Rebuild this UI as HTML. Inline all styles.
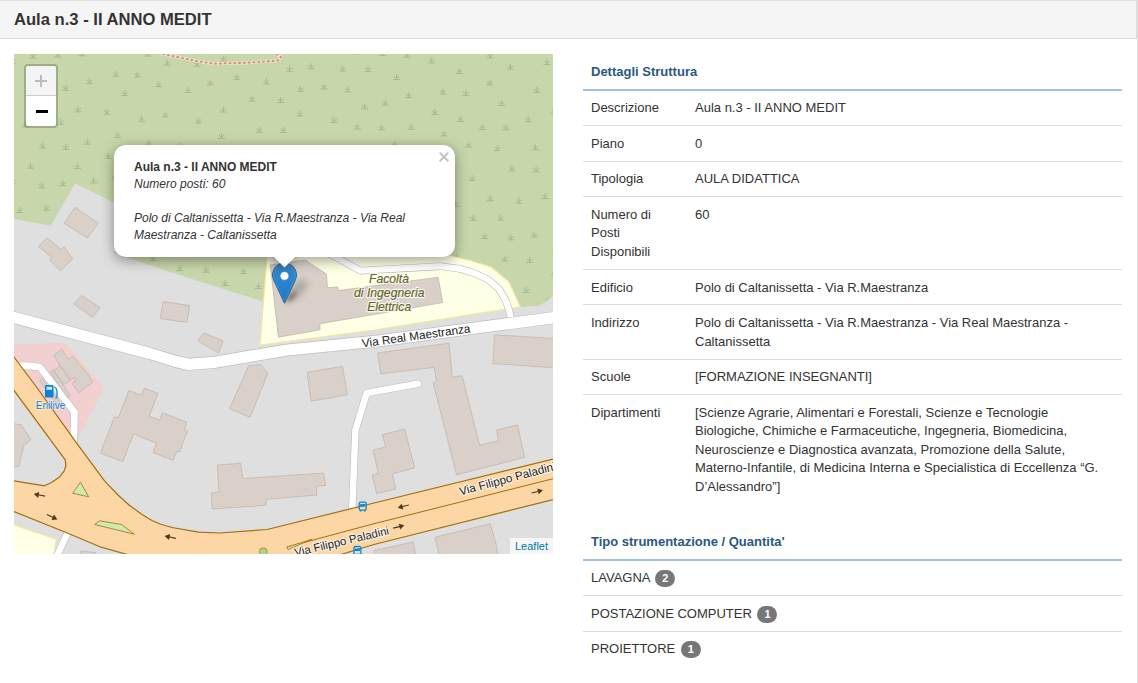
<!DOCTYPE html>
<html><head><meta charset="utf-8">
<style>
html,body{margin:0;padding:0;background:#fff;width:1138px;height:683px;overflow:hidden;position:relative;font-family:"Liberation Sans",sans-serif;color:#333;}
.hdr{position:absolute;left:-1px;top:0;width:1137px;height:37px;background:#f5f5f5;border-top:1px solid #ddd;border-bottom:1px solid #ddd;border-right:1px solid #ddd;}
.vline{position:absolute;left:1137px;top:0;width:1px;height:683px;background:#ddd;}
.title{position:absolute;left:14px;top:10px;font-size:16.6px;font-weight:bold;color:#333;line-height:20px;white-space:nowrap;}
#map{position:absolute;left:14px;top:54px;width:539px;height:500px;overflow:hidden;background:#e0dfdf;}
#map svg{position:absolute;left:0;top:0;}
.zoom{position:absolute;left:10px;top:10px;width:30px;border:2px solid rgba(0,0,0,0.2);border-radius:4px;background-clip:padding-box;}
.zoom div{width:30px;height:30px;}
.zin{background:#f4f4f4;color:#bbb;border-bottom:1px solid #ccc;border-radius:2px 2px 0 0;height:29px!important;}
.zout{background:#fff;color:#000;border-radius:0 0 2px 2px;}
.popup{position:absolute;left:100px;top:91px;width:341px;height:112px;background:#fff;border-radius:12px;box-shadow:0 3px 14px rgba(0,0,0,0.4);}
.pc{position:absolute;left:20px;top:14px;width:300px;font-size:12px;line-height:16.8px;color:#333;}
.close{position:absolute;left:330.1px;top:12.4px;width:0;height:0;}.close:before,.close:after{content:"";position:absolute;left:-6px;top:-1.1px;width:12px;height:2.2px;background:#c3c3c3;transform:rotate(45deg);}.close:after{transform:rotate(-45deg);}
.tipc{position:absolute;left:251px;top:203px;width:40px;height:20px;overflow:hidden;}
.tip{position:absolute;left:11px;top:-10px;width:17px;height:17px;background:#fff;transform:rotate(45deg);box-shadow:0 3px 14px rgba(0,0,0,0.4);}
.attr{position:absolute;right:0;bottom:0;background:rgba(255,255,255,0.7);font-size:11px;line-height:16px;padding:0 5px;color:#0078a8;}
.tbl{position:absolute;left:583px;width:539px;border-collapse:collapse;font-size:13px;line-height:18.57px;color:#333;}
.tbl th{font-weight:bold;color:#2b5781;text-align:left;padding:8.7px 8px 7.3px;border-bottom:2px solid #a4c0da;}
.tbl td{padding:8.7px 8px 7.3px;border-top:1px solid #ddd;vertical-align:top;}
.badge{display:inline-block;width:20px;margin-left:2px;padding:3px 0;font-size:11px;font-weight:bold;line-height:1;color:#fff;text-align:center;white-space:nowrap;vertical-align:middle;background:#777;border-radius:10px;}
</style></head>
<body>
<div class="hdr"></div>
<div class="vline"></div>
<div class="title">Aula n.3 - II ANNO MEDIT</div>

<div id="map">
<svg id="msvg" width="539" height="500" viewBox="14 54 539 500">
<rect x="0" y="0" width="600" height="600" fill="#e0dfdf"/>
<polygon points="14,54 554,54 554,295.6 540,305.4 520,307 265,302 194,279.7 113,253 130,230 114,202.5 75,183.6 50.7,225.7 14,219" fill="#c8d7ab" />
<clipPath id="scrubclip"><polygon points="14,54 554,54 554,295.6 540,305.4 520,307 265,302 194,279.7 113,253 130,230 114,202.5 75,183.6 50.7,225.7 14,219" fill="#000" /></clipPath>
<g clip-path="url(#scrubclip)" stroke="#a8b98c" stroke-width="1" fill="none"><path d="M184.6,92.4 h7 M188.1,92.4 v-5.5 M188.1,91.4 l-2.8,-2.5 M188.1,91.4 l2.8,-2.5" /><path d="M364.5,71.4 h7 M368.0,71.4 v-5.5 M368.0,70.4 l-2.8,-2.5 M368.0,70.4 l2.8,-2.5" /><path d="M301.2,150.0 h7 M304.7,150.0 v-5.5 M304.7,149.0 l-2.8,-2.5 M304.7,149.0 l2.8,-2.5" /><path d="M38.4,188.0 h7 M41.9,188.0 v-5.5 M41.9,187.0 l-2.8,-2.5 M41.9,187.0 l2.8,-2.5" /><path d="M27.1,168.2 h7 M30.6,168.2 v-5.5 M30.6,167.2 l-2.8,-2.5 M30.6,167.2 l2.8,-2.5" /><path d="M44.9,76.3 h7 M48.4,76.3 v-5.5 M48.4,75.3 l-2.8,-2.5 M48.4,75.3 l2.8,-2.5" /><path d="M240.0,273.6 h7 M243.5,273.6 v-5.5 M243.5,272.6 l-2.8,-2.5 M243.5,272.6 l2.8,-2.5" /><path d="M74.6,111.8 h7 M78.1,111.8 v-5.5 M78.1,110.8 l-2.8,-2.5 M78.1,110.8 l2.8,-2.5" /><path d="M351.6,306.0 h7 M355.1,306.0 v-5.5 M355.1,305.0 l-2.8,-2.5 M355.1,305.0 l2.8,-2.5" /><path d="M323.9,158.3 h7 M327.4,158.3 v-5.5 M327.4,157.3 l-2.8,-2.5 M327.4,157.3 l2.8,-2.5" /><path d="M543.4,64.5 h7 M546.9,64.5 v-5.5 M546.9,63.5 l-2.8,-2.5 M546.9,63.5 l2.8,-2.5" /><path d="M478.7,129.6 h7 M482.2,129.6 v-5.5 M482.2,128.6 l-2.8,-2.5 M482.2,128.6 l2.8,-2.5" /><path d="M85.8,83.6 h7 M89.3,83.6 v-5.5 M89.3,82.6 l-2.8,-2.5 M89.3,82.6 l2.8,-2.5" /><path d="M176.2,270.7 h7 M179.7,270.7 v-5.5 M179.7,269.7 l-2.8,-2.5 M179.7,269.7 l2.8,-2.5" /><path d="M105.9,207.9 h7 M109.4,207.9 v-5.5 M109.4,206.9 l-2.8,-2.5 M109.4,206.9 l2.8,-2.5" /><path d="M357.9,151.8 h7 M361.4,151.8 v-5.5 M361.4,150.8 l-2.8,-2.5 M361.4,150.8 l2.8,-2.5" /><path d="M307.8,68.8 h7 M311.3,68.8 v-5.5 M311.3,67.8 l-2.8,-2.5 M311.3,67.8 l2.8,-2.5" /><path d="M39.3,107.2 h7 M42.8,107.2 v-5.5 M42.8,106.2 l-2.8,-2.5 M42.8,106.2 l2.8,-2.5" /><path d="M380.7,166.6 h7 M384.2,166.6 v-5.5 M384.2,165.6 l-2.8,-2.5 M384.2,165.6 l2.8,-2.5" /><path d="M179.3,208.9 h7 M182.8,208.9 v-5.5 M182.8,207.9 l-2.8,-2.5 M182.8,207.9 l2.8,-2.5" /><path d="M255.8,132.3 h7 M259.3,132.3 v-5.5 M259.3,131.3 l-2.8,-2.5 M259.3,131.3 l2.8,-2.5" /><path d="M443.4,239.3 h7 M446.9,239.3 v-5.5 M446.9,238.3 l-2.8,-2.5 M446.9,238.3 l2.8,-2.5" /><path d="M140.8,205.9 h7 M144.3,205.9 v-5.5 M144.3,204.9 l-2.8,-2.5 M144.3,204.9 l2.8,-2.5" /><path d="M295.4,286.5 h7 M298.9,286.5 v-5.5 M298.9,285.5 l-2.8,-2.5 M298.9,285.5 l2.8,-2.5" /><path d="M407.7,129.2 h7 M411.2,129.2 v-5.5 M411.2,128.2 l-2.8,-2.5 M411.2,128.2 l2.8,-2.5" /><path d="M90.1,183.0 h7 M93.6,183.0 v-5.5 M93.6,182.0 l-2.8,-2.5 M93.6,182.0 l2.8,-2.5" /><path d="M28.1,231.1 h7 M31.6,231.1 v-5.5 M31.6,230.1 l-2.8,-2.5 M31.6,230.1 l2.8,-2.5" /><path d="M427.0,205.6 h7 M430.5,205.6 v-5.5 M430.5,204.6 l-2.8,-2.5 M430.5,204.6 l2.8,-2.5" /><path d="M388.9,211.3 h7 M392.4,211.3 v-5.5 M392.4,210.3 l-2.8,-2.5 M392.4,210.3 l2.8,-2.5" /><path d="M468.5,305.2 h7 M472.0,305.2 v-5.5 M472.0,304.2 l-2.8,-2.5 M472.0,304.2 l2.8,-2.5" /><path d="M267.3,230.0 h7 M270.8,230.0 v-5.5 M270.8,229.0 l-2.8,-2.5 M270.8,229.0 l2.8,-2.5" /><path d="M218.7,231.2 h7 M222.2,231.2 v-5.5 M222.2,230.2 l-2.8,-2.5 M222.2,230.2 l2.8,-2.5" /><path d="M38.9,257.9 h7 M42.4,257.9 v-5.5 M42.4,256.9 l-2.8,-2.5 M42.4,256.9 l2.8,-2.5" /><path d="M221.5,285.5 h7 M225.0,285.5 v-5.5 M225.0,284.5 l-2.8,-2.5 M225.0,284.5 l2.8,-2.5" /><path d="M457.1,283.5 h7 M460.6,283.5 v-5.5 M460.6,282.5 l-2.8,-2.5 M460.6,282.5 l2.8,-2.5" /><path d="M159.6,163.3 h7 M163.1,163.3 v-5.5 M163.1,162.3 l-2.8,-2.5 M163.1,162.3 l2.8,-2.5" /><path d="M533.3,92.4 h7 M536.8,92.4 v-5.5 M536.8,91.4 l-2.8,-2.5 M536.8,91.4 l2.8,-2.5" /><path d="M103.4,114.2 h7 M106.9,114.2 v-5.5 M106.9,113.2 l-2.8,-2.5 M106.9,113.2 l2.8,-2.5" /><path d="M134.8,182.0 h7 M138.3,182.0 v-5.5 M138.3,181.0 l-2.8,-2.5 M138.3,181.0 l2.8,-2.5" /><path d="M330.5,122.4 h7 M334.0,122.4 v-5.5 M334.0,121.4 l-2.8,-2.5 M334.0,121.4 l2.8,-2.5" /><path d="M209.6,203.8 h7 M213.1,203.8 v-5.5 M213.1,202.8 l-2.8,-2.5 M213.1,202.8 l2.8,-2.5" /><path d="M530.7,237.1 h7 M534.2,237.1 v-5.5 M534.2,236.1 l-2.8,-2.5 M534.2,236.1 l2.8,-2.5" /><path d="M290.0,217.5 h7 M293.5,217.5 v-5.5 M293.5,216.5 l-2.8,-2.5 M293.5,216.5 l2.8,-2.5" /><path d="M501.2,261.0 h7 M504.7,261.0 v-5.5 M504.7,260.0 l-2.8,-2.5 M504.7,260.0 l2.8,-2.5" /><path d="M222.3,158.9 h7 M225.8,158.9 v-5.5 M225.8,157.9 l-2.8,-2.5 M225.8,157.9 l2.8,-2.5" /><path d="M63.400000000000006,222.0 h7 M66.9,222.0 v-5.5 M66.9,221.0 l-2.8,-2.5 M66.9,221.0 l2.8,-2.5" /><path d="M121.3,95.5 h7 M124.8,95.5 v-5.5 M124.8,94.5 l-2.8,-2.5 M124.8,94.5 l2.8,-2.5" /><path d="M193.5,66.1 h7 M197.0,66.1 v-5.5 M197.0,65.1 l-2.8,-2.5 M197.0,65.1 l2.8,-2.5" /><path d="M6.6,92.5 h7 M10.1,92.5 v-5.5 M10.1,91.5 l-2.8,-2.5 M10.1,91.5 l2.8,-2.5" /><path d="M62.3,149.4 h7 M65.8,149.4 v-5.5 M65.8,148.4 l-2.8,-2.5 M65.8,148.4 l2.8,-2.5" /><path d="M20.5,286.3 h7 M24.0,286.3 v-5.5 M24.0,285.3 l-2.8,-2.5 M24.0,285.3 l2.8,-2.5" /><path d="M344.2,91.8 h7 M347.7,91.8 v-5.5 M347.7,90.8 l-2.8,-2.5 M347.7,90.8 l2.8,-2.5" /><path d="M145.2,145.1 h7 M148.7,145.1 v-5.5 M148.7,144.1 l-2.8,-2.5 M148.7,144.1 l2.8,-2.5" /><path d="M206.8,84.9 h7 M210.3,84.9 v-5.5 M210.3,83.9 l-2.8,-2.5 M210.3,83.9 l2.8,-2.5" /><path d="M262.8,181.7 h7 M266.3,181.7 v-5.5 M266.3,180.7 l-2.8,-2.5 M266.3,180.7 l2.8,-2.5" /><path d="M194.9,123.0 h7 M198.4,123.0 v-5.5 M198.4,122.0 l-2.8,-2.5 M198.4,122.0 l2.8,-2.5" /><path d="M462.4,95.3 h7 M465.9,95.3 v-5.5 M465.9,94.3 l-2.8,-2.5 M465.9,94.3 l2.8,-2.5" /><path d="M297.0,91.3 h7 M300.5,91.3 v-5.5 M300.5,90.3 l-2.8,-2.5 M300.5,90.3 l2.8,-2.5" /><path d="M297.0,314.2 h7 M300.5,314.2 v-5.5 M300.5,313.2 l-2.8,-2.5 M300.5,313.2 l2.8,-2.5" /><path d="M481.3,238.6 h7 M484.8,238.6 v-5.5 M484.8,237.6 l-2.8,-2.5 M484.8,237.6 l2.8,-2.5" /><path d="M98.4,258.9 h7 M101.9,258.9 v-5.5 M101.9,257.9 l-2.8,-2.5 M101.9,257.9 l2.8,-2.5" /><path d="M299.4,260.8 h7 M302.9,260.8 v-5.5 M302.9,259.8 l-2.8,-2.5 M302.9,259.8 l2.8,-2.5" /><path d="M475.4,268.0 h7 M478.9,268.0 v-5.5 M478.9,267.0 l-2.8,-2.5 M478.9,267.0 l2.8,-2.5" /><path d="M21.9,126.9 h7 M25.4,126.9 v-5.5 M25.4,125.9 l-2.8,-2.5 M25.4,125.9 l2.8,-2.5" /><path d="M149.0,237.6 h7 M152.5,237.6 v-5.5 M152.5,236.6 l-2.8,-2.5 M152.5,236.6 l2.8,-2.5" /><path d="M532.6,171.9 h7 M536.1,171.9 v-5.5 M536.1,170.9 l-2.8,-2.5 M536.1,170.9 l2.8,-2.5" /><path d="M521.9,316.8 h7 M525.4,316.8 v-5.5 M525.4,315.8 l-2.8,-2.5 M525.4,315.8 l2.8,-2.5" /><path d="M531.8,149.7 h7 M535.3,149.7 v-5.5 M535.3,148.7 l-2.8,-2.5 M535.3,148.7 l2.8,-2.5" /><path d="M468.7,180.5 h7 M472.2,180.5 v-5.5 M472.2,179.5 l-2.8,-2.5 M472.2,179.5 l2.8,-2.5" /><path d="M365.6,266.3 h7 M369.1,266.3 v-5.5 M369.1,265.3 l-2.8,-2.5 M369.1,265.3 l2.8,-2.5" /><path d="M419.1,180.1 h7 M422.6,180.1 v-5.5 M422.6,179.1 l-2.8,-2.5 M422.6,179.1 l2.8,-2.5" /><path d="M227.3,305.7 h7 M230.8,305.7 v-5.5 M230.8,304.7 l-2.8,-2.5 M230.8,304.7 l2.8,-2.5" /><path d="M405.1,97.6 h7 M408.6,97.6 v-5.5 M408.6,96.6 l-2.8,-2.5 M408.6,96.6 l2.8,-2.5" /><path d="M78.5,55.8 h7 M82.0,55.8 v-5.5 M82.0,54.8 l-2.8,-2.5 M82.0,54.8 l2.8,-2.5" /><path d="M78.6,295.9 h7 M82.1,295.9 v-5.5 M82.1,294.9 l-2.8,-2.5 M82.1,294.9 l2.8,-2.5" /><path d="M201.1,174.8 h7 M204.6,174.8 v-5.5 M204.6,173.8 l-2.8,-2.5 M204.6,173.8 l2.8,-2.5" /><path d="M327.3,294.4 h7 M330.8,294.4 v-5.5 M330.8,293.4 l-2.8,-2.5 M330.8,293.4 l2.8,-2.5" /><path d="M282.4,194.5 h7 M285.9,194.5 v-5.5 M285.9,193.5 l-2.8,-2.5 M285.9,193.5 l2.8,-2.5" /><path d="M248.6,101.1 h7 M252.1,101.1 v-5.5 M252.1,100.1 l-2.8,-2.5 M252.1,100.1 l2.8,-2.5" /><path d="M8.7,266.2 h7 M12.2,266.2 v-5.5 M12.2,265.2 l-2.8,-2.5 M12.2,265.2 l2.8,-2.5" /><path d="M508.4,170.8 h7 M511.9,170.8 v-5.5 M511.9,169.8 l-2.8,-2.5 M511.9,169.8 l2.8,-2.5" /><path d="M343.4,187.5 h7 M346.9,187.5 v-5.5 M346.9,186.5 l-2.8,-2.5 M346.9,186.5 l2.8,-2.5" /><path d="M269.4,304.3 h7 M272.9,304.3 v-5.5 M272.9,303.3 l-2.8,-2.5 M272.9,303.3 l2.8,-2.5" /><path d="M391.1,286.9 h7 M394.6,286.9 v-5.5 M394.6,285.9 l-2.8,-2.5 M394.6,285.9 l2.8,-2.5" /><path d="M524.7,121.6 h7 M528.2,121.6 v-5.5 M528.2,120.6 l-2.8,-2.5 M528.2,120.6 l2.8,-2.5" /><path d="M437.7,292.4 h7 M441.2,292.4 v-5.5 M441.2,291.4 l-2.8,-2.5 M441.2,291.4 l2.8,-2.5" /><path d="M492.1,311.3 h7 M495.6,311.3 v-5.5 M495.6,310.3 l-2.8,-2.5 M495.6,310.3 l2.8,-2.5" /><path d="M127.30000000000001,307.3 h7 M130.8,307.3 v-5.5 M130.8,306.3 l-2.8,-2.5 M130.8,306.3 l2.8,-2.5" /><path d="M225.5,182.6 h7 M229.0,182.6 v-5.5 M229.0,181.6 l-2.8,-2.5 M229.0,181.6 l2.8,-2.5" /><path d="M550.9,275.1 h7 M554.4,275.1 v-5.5 M554.4,274.1 l-2.8,-2.5 M554.4,274.1 l2.8,-2.5" /><path d="M114.2,137.4 h7 M117.7,137.4 v-5.5 M117.7,136.4 l-2.8,-2.5 M117.7,136.4 l2.8,-2.5" /><path d="M403.7,57.2 h7 M407.2,57.2 v-5.5 M407.2,56.2 l-2.8,-2.5 M407.2,56.2 l2.8,-2.5" /><path d="M41.9,316.0 h7 M45.4,316.0 v-5.5 M45.4,315.0 l-2.8,-2.5 M45.4,315.0 l2.8,-2.5" /><path d="M155.2,86.7 h7 M158.7,86.7 v-5.5 M158.7,85.7 l-2.8,-2.5 M158.7,85.7 l2.8,-2.5" /><path d="M456.9,121.3 h7 M460.4,121.3 v-5.5 M460.4,120.3 l-2.8,-2.5 M460.4,120.3 l2.8,-2.5" /><path d="M320.3,239.7 h7 M323.8,239.7 v-5.5 M323.8,238.7 l-2.8,-2.5 M323.8,238.7 l2.8,-2.5" /><path d="M52.6,281.5 h7 M56.1,281.5 v-5.5 M56.1,280.5 l-2.8,-2.5 M56.1,280.5 l2.8,-2.5" /><path d="M296.3,115.9 h7 M299.8,115.9 v-5.5 M299.8,114.9 l-2.8,-2.5 M299.8,114.9 l2.8,-2.5" /><path d="M144.2,56.1 h7 M147.7,56.1 v-5.5 M147.7,55.1 l-2.8,-2.5 M147.7,55.1 l2.8,-2.5" /><path d="M384.8,315.3 h7 M388.3,315.3 v-5.5 M388.3,314.3 l-2.8,-2.5 M388.3,314.3 l2.8,-2.5" /><path d="M161.6,116.9 h7 M165.1,116.9 v-5.5 M165.1,115.9 l-2.8,-2.5 M165.1,115.9 l2.8,-2.5" /><path d="M151.3,309.8 h7 M154.8,309.8 v-5.5 M154.8,308.8 l-2.8,-2.5 M154.8,308.8 l2.8,-2.5" /><path d="M541.4,198.6 h7 M544.9,198.6 v-5.5 M544.9,197.6 l-2.8,-2.5 M544.9,197.6 l2.8,-2.5" /><path d="M176.8,147.6 h7 M180.3,147.6 v-5.5 M180.3,146.6 l-2.8,-2.5 M180.3,146.6 l2.8,-2.5" /><path d="M7.1,154.3 h7 M10.6,154.3 v-5.5 M10.6,153.3 l-2.8,-2.5 M10.6,153.3 l2.8,-2.5" /><path d="M29.4,58.0 h7 M32.9,58.0 v-5.5 M32.9,57.0 l-2.8,-2.5 M32.9,57.0 l2.8,-2.5" /><path d="M419.3,228.2 h7 M422.8,228.2 v-5.5 M422.8,227.2 l-2.8,-2.5 M422.8,227.2 l2.8,-2.5" /><path d="M497.1,220.1 h7 M500.6,220.1 v-5.5 M500.6,219.1 l-2.8,-2.5 M500.6,219.1 l2.8,-2.5" /><path d="M410.1,269.7 h7 M413.6,269.7 v-5.5 M413.6,268.7 l-2.8,-2.5 M413.6,268.7 l2.8,-2.5" /><path d="M382.1,237.8 h7 M385.6,237.8 v-5.5 M385.6,236.8 l-2.8,-2.5 M385.6,236.8 l2.8,-2.5" /><path d="M350.9,234.4 h7 M354.4,234.4 v-5.5 M354.4,233.4 l-2.8,-2.5 M354.4,233.4 l2.8,-2.5" /><path d="M275.6,52.9 h7 M279.1,52.9 v-5.5 M279.1,51.9 l-2.8,-2.5 M279.1,51.9 l2.8,-2.5" /><path d="M413.4,313.5 h7 M416.9,313.5 v-5.5 M416.9,312.5 l-2.8,-2.5 M416.9,312.5 l2.8,-2.5" /><path d="M278.2,154.5 h7 M281.7,154.5 v-5.5 M281.7,153.5 l-2.8,-2.5 M281.7,153.5 l2.8,-2.5" /><path d="M378.1,129.9 h7 M381.6,129.9 v-5.5 M381.6,128.9 l-2.8,-2.5 M381.6,128.9 l2.8,-2.5" /><path d="M263.0,83.8 h7 M266.5,83.8 v-5.5 M266.5,82.8 l-2.8,-2.5 M266.5,82.8 l2.8,-2.5" /><path d="M498.0,105.4 h7 M501.5,105.4 v-5.5 M501.5,104.4 l-2.8,-2.5 M501.5,104.4 l2.8,-2.5" /><path d="M544.5,302.9 h7 M548.0,302.9 v-5.5 M548.0,301.9 l-2.8,-2.5 M548.0,301.9 l2.8,-2.5" /><path d="M8.5,183.8 h7 M12.0,183.8 v-5.5 M12.0,182.8 l-2.8,-2.5 M12.0,182.8 l2.8,-2.5" /><path d="M83.9,144.2 h7 M87.4,144.2 v-5.5 M87.4,143.2 l-2.8,-2.5 M87.4,143.2 l2.8,-2.5" /><path d="M502.4,129.7 h7 M505.9,129.7 v-5.5 M505.9,128.7 l-2.8,-2.5 M505.9,128.7 l2.8,-2.5" /><path d="M163.9,65.1 h7 M167.4,65.1 v-5.5 M167.4,64.1 l-2.8,-2.5 M167.4,64.1 l2.8,-2.5" /><path d="M170.3,250.1 h7 M173.8,250.1 v-5.5 M173.8,249.1 l-2.8,-2.5 M173.8,249.1 l2.8,-2.5" /><path d="M112.3,76.3 h7 M115.8,76.3 v-5.5 M115.8,75.3 l-2.8,-2.5 M115.8,75.3 l2.8,-2.5" /><path d="M138.0,121.2 h7 M141.5,121.2 v-5.5 M141.5,120.2 l-2.8,-2.5 M141.5,120.2 l2.8,-2.5" /><path d="M486.6,57.8 h7 M490.1,57.8 v-5.5 M490.1,56.8 l-2.8,-2.5 M490.1,56.8 l2.8,-2.5" /><path d="M329.4,52.0 h7 M332.9,52.0 v-5.5 M332.9,51.0 l-2.8,-2.5 M332.9,51.0 l2.8,-2.5" /><path d="M219.9,111.9 h7 M223.4,111.9 v-5.5 M223.4,110.9 l-2.8,-2.5 M223.4,110.9 l2.8,-2.5" /><path d="M381.9,105.1 h7 M385.4,105.1 v-5.5 M385.4,104.1 l-2.8,-2.5 M385.4,104.1 l2.8,-2.5" /><path d="M128.3,255.8 h7 M131.8,255.8 v-5.5 M131.8,254.8 l-2.8,-2.5 M131.8,254.8 l2.8,-2.5" /><path d="M500.5,288.8 h7 M504.0,288.8 v-5.5 M504.0,287.8 l-2.8,-2.5 M504.0,287.8 l2.8,-2.5" /><path d="M99.6,52.8 h7 M103.1,52.8 v-5.5 M103.1,51.8 l-2.8,-2.5 M103.1,51.8 l2.8,-2.5" /><path d="M202.6,272.2 h7 M206.1,272.2 v-5.5 M206.1,271.2 l-2.8,-2.5 M206.1,271.2 l2.8,-2.5" /><path d="M428.2,62.9 h7 M431.7,62.9 v-5.5 M431.7,61.9 l-2.8,-2.5 M431.7,61.9 l2.8,-2.5" /><path d="M185.7,314.7 h7 M189.2,314.7 v-5.5 M189.2,313.7 l-2.8,-2.5 M189.2,313.7 l2.8,-2.5" /><path d="M59.5,185.6 h7 M63.0,185.6 v-5.5 M63.0,184.6 l-2.8,-2.5 M63.0,184.6 l2.8,-2.5" /><path d="M267.6,271.5 h7 M271.1,271.5 v-5.5 M271.1,270.5 l-2.8,-2.5 M271.1,270.5 l2.8,-2.5" /><path d="M149.5,260.4 h7 M153.0,260.4 v-5.5 M153.0,259.4 l-2.8,-2.5 M153.0,259.4 l2.8,-2.5" /><path d="M334.4,218.1 h7 M337.9,218.1 v-5.5 M337.9,217.1 l-2.8,-2.5 M337.9,217.1 l2.8,-2.5" /><path d="M126.5,159.1 h7 M130.0,159.1 v-5.5 M130.0,158.1 l-2.8,-2.5 M130.0,158.1 l2.8,-2.5" /><path d="M237.5,208.1 h7 M241.0,208.1 v-5.5 M241.0,207.1 l-2.8,-2.5 M241.0,207.1 l2.8,-2.5" /><path d="M486.6,200.8 h7 M490.1,200.8 v-5.5 M490.1,199.8 l-2.8,-2.5 M490.1,199.8 l2.8,-2.5" /><path d="M64.0,318.1 h7 M67.5,318.1 v-5.5 M67.5,317.1 l-2.8,-2.5 M67.5,317.1 l2.8,-2.5" /><path d="M247.0,246.2 h7 M250.5,246.2 v-5.5 M250.5,245.2 l-2.8,-2.5 M250.5,245.2 l2.8,-2.5" /><path d="M42.7,210.2 h7 M46.2,210.2 v-5.5 M46.2,209.2 l-2.8,-2.5 M46.2,209.2 l2.8,-2.5" /><path d="M353.8,129.0 h7 M357.3,129.0 v-5.5 M357.3,128.0 l-2.8,-2.5 M357.3,128.0 l2.8,-2.5" /><path d="M197.2,240.8 h7 M200.7,240.8 v-5.5 M200.7,239.8 l-2.8,-2.5 M200.7,239.8 l2.8,-2.5" /><path d="M391.2,185.5 h7 M394.7,185.5 v-5.5 M394.7,184.5 l-2.8,-2.5 M394.7,184.5 l2.8,-2.5" /><path d="M389.9,262.9 h7 M393.4,262.9 v-5.5 M393.4,261.9 l-2.8,-2.5 M393.4,261.9 l2.8,-2.5" /><path d="M220.1,61.1 h7 M223.6,61.1 v-5.5 M223.6,60.1 l-2.8,-2.5 M223.6,60.1 l2.8,-2.5" /><path d="M84.5,213.8 h7 M88.0,213.8 v-5.5 M88.0,212.8 l-2.8,-2.5 M88.0,212.8 l2.8,-2.5" /><path d="M359.3,173.6 h7 M362.8,173.6 v-5.5 M362.8,172.6 l-2.8,-2.5 M362.8,172.6 l2.8,-2.5" /><path d="M434.5,156.2 h7 M438.0,156.2 v-5.5 M438.0,155.2 l-2.8,-2.5 M438.0,155.2 l2.8,-2.5" /><path d="M122.0,235.4 h7 M125.5,235.4 v-5.5 M125.5,234.4 l-2.8,-2.5 M125.5,234.4 l2.8,-2.5" /><path d="M222.4,256.4 h7 M225.9,256.4 v-5.5 M225.9,255.39999999999998 l-2.8,-2.5 M225.9,255.39999999999998 l2.8,-2.5" /><path d="M465.1,147.1 h7 M468.6,147.1 v-5.5 M468.6,146.1 l-2.8,-2.5 M468.6,146.1 l2.8,-2.5" /><path d="M172.5,180.5 h7 M176.0,180.5 v-5.5 M176.0,179.5 l-2.8,-2.5 M176.0,179.5 l2.8,-2.5" /><path d="M83.7,274.8 h7 M87.2,274.8 v-5.5 M87.2,273.8 l-2.8,-2.5 M87.2,273.8 l2.8,-2.5" /><path d="M12.8,307.1 h7 M16.3,307.1 v-5.5 M16.3,306.1 l-2.8,-2.5 M16.3,306.1 l2.8,-2.5" /><path d="M62.3,90.3 h7 M65.8,90.3 v-5.5 M65.8,89.3 l-2.8,-2.5 M65.8,89.3 l2.8,-2.5" /><path d="M341.1,261.4 h7 M344.6,261.4 v-5.5 M344.6,260.4 l-2.8,-2.5 M344.6,260.4 l2.8,-2.5" /><path d="M452.2,206.2 h7 M455.7,206.2 v-5.5 M455.7,205.2 l-2.8,-2.5 M455.7,205.2 l2.8,-2.5" /><path d="M233.3,79.3 h7 M236.8,79.3 v-5.5 M236.8,78.3 l-2.8,-2.5 M236.8,78.3 l2.8,-2.5" /><path d="M361.0,108.9 h7 M364.5,108.9 v-5.5 M364.5,107.9 l-2.8,-2.5 M364.5,107.9 l2.8,-2.5" /><path d="M456.0,73.4 h7 M459.5,73.4 v-5.5 M459.5,72.4 l-2.8,-2.5 M459.5,72.4 l2.8,-2.5" /><path d="M526.2,262.3 h7 M529.7,262.3 v-5.5 M529.7,261.3 l-2.8,-2.5 M529.7,261.3 l2.8,-2.5" /><path d="M431.2,114.4 h7 M434.7,114.4 v-5.5 M434.7,113.4 l-2.8,-2.5 M434.7,113.4 l2.8,-2.5" /><path d="M554.9,152.2 h7 M558.4,152.2 v-5.5 M558.4,151.2 l-2.8,-2.5 M558.4,151.2 l2.8,-2.5" /><path d="M439.5,93.8 h7 M443.0,93.8 v-5.5 M443.0,92.8 l-2.8,-2.5 M443.0,92.8 l2.8,-2.5" /><path d="M507.0,69.2 h7 M510.5,69.2 v-5.5 M510.5,68.2 l-2.8,-2.5 M510.5,68.2 l2.8,-2.5" /><path d="M379.2,55.4 h7 M382.7,55.4 v-5.5 M382.7,54.4 l-2.8,-2.5 M382.7,54.4 l2.8,-2.5" /><path d="M469.7,220.4 h7 M473.2,220.4 v-5.5 M473.2,219.4 l-2.8,-2.5 M473.2,219.4 l2.8,-2.5" /><path d="M181.4,294.0 h7 M184.9,294.0 v-5.5 M184.9,293.0 l-2.8,-2.5 M184.9,293.0 l2.8,-2.5" /><path d="M206.9,317.6 h7 M210.4,317.6 v-5.5 M210.4,316.6 l-2.8,-2.5 M210.4,316.6 l2.8,-2.5" /><path d="M320.7,89.0 h7 M324.2,89.0 v-5.5 M324.2,88.0 l-2.8,-2.5 M324.2,88.0 l2.8,-2.5" /><path d="M409.5,161.4 h7 M413.0,161.4 v-5.5 M413.0,160.4 l-2.8,-2.5 M413.0,160.4 l2.8,-2.5" /><path d="M72.9,243.5 h7 M76.4,243.5 v-5.5 M76.4,242.5 l-2.8,-2.5 M76.4,242.5 l2.8,-2.5" /><path d="M16.2,212.6 h7 M19.7,212.6 v-5.5 M19.7,211.6 l-2.8,-2.5 M19.7,211.6 l2.8,-2.5" /><path d="M393.0,79.6 h7 M396.5,79.6 v-5.5 M396.5,78.6 l-2.8,-2.5 M396.5,78.6 l2.8,-2.5" /><path d="M312.7,183.7 h7 M316.2,183.7 v-5.5 M316.2,182.7 l-2.8,-2.5 M316.2,182.7 l2.8,-2.5" /><path d="M218.0,138.3 h7 M221.5,138.3 v-5.5 M221.5,137.3 l-2.8,-2.5 M221.5,137.3 l2.8,-2.5" /><path d="M253.89999999999998,155.4 h7 M257.4,155.4 v-5.5 M257.4,154.4 l-2.8,-2.5 M257.4,154.4 l2.8,-2.5" /><path d="M57.4,124.3 h7 M60.9,124.3 v-5.5 M60.9,123.3 l-2.8,-2.5 M60.9,123.3 l2.8,-2.5" /><path d="M486.3,84.9 h7 M489.8,84.9 v-5.5 M489.8,83.9 l-2.8,-2.5 M489.8,83.9 l2.8,-2.5" /><path d="M39.2,147.9 h7 M42.7,147.9 v-5.5 M42.7,146.9 l-2.8,-2.5 M42.7,146.9 l2.8,-2.5" /><path d="M99.6,230.6 h7 M103.1,230.6 v-5.5 M103.1,229.6 l-2.8,-2.5 M103.1,229.6 l2.8,-2.5" /><path d="M552.2,253.1 h7 M555.7,253.1 v-5.5 M555.7,252.1 l-2.8,-2.5 M555.7,252.1 l2.8,-2.5" /><path d="M263.8,206.6 h7 M267.3,206.6 v-5.5 M267.3,205.6 l-2.8,-2.5 M267.3,205.6 l2.8,-2.5" /><path d="M325.8,316.6 h7 M329.3,316.6 v-5.5 M329.3,315.6 l-2.8,-2.5 M329.3,315.6 l2.8,-2.5" /><path d="M515.4,203.2 h7 M518.9,203.2 v-5.5 M518.9,202.2 l-2.8,-2.5 M518.9,202.2 l2.8,-2.5" /><path d="M550.7,113.1 h7 M554.2,113.1 v-5.5 M554.2,112.1 l-2.8,-2.5 M554.2,112.1 l2.8,-2.5" /><path d="M446.8,175.3 h7 M450.3,175.3 v-5.5 M450.3,174.3 l-2.8,-2.5 M450.3,174.3 l2.8,-2.5" /><path d="M361.9,199.1 h7 M365.4,199.1 v-5.5 M365.4,198.1 l-2.8,-2.5 M365.4,198.1 l2.8,-2.5" /><path d="M429.6,258.3 h7 M433.1,258.3 v-5.5 M433.1,257.3 l-2.8,-2.5 M433.1,257.3 l2.8,-2.5" /><path d="M446.2,314.7 h7 M449.7,314.7 v-5.5 M449.7,313.7 l-2.8,-2.5 M449.7,313.7 l2.8,-2.5" /><path d="M200.6,152.4 h7 M204.1,152.4 v-5.5 M204.1,151.4 l-2.8,-2.5 M204.1,151.4 l2.8,-2.5" /><path d="M99.8,304.3 h7 M103.3,304.3 v-5.5 M103.3,303.3 l-2.8,-2.5 M103.3,303.3 l2.8,-2.5" /><path d="M138.4,285.6 h7 M141.9,285.6 v-5.5 M141.9,284.6 l-2.8,-2.5 M141.9,284.6 l2.8,-2.5" /><path d="M322.8,273.3 h7 M326.3,273.3 v-5.5 M326.3,272.3 l-2.8,-2.5 M326.3,272.3 l2.8,-2.5" /><path d="M363.4,287.5 h7 M366.9,287.5 v-5.5 M366.9,286.5 l-2.8,-2.5 M366.9,286.5 l2.8,-2.5" /><path d="M403.9,244.8 h7 M407.4,244.8 v-5.5 M407.4,243.8 l-2.8,-2.5 M407.4,243.8 l2.8,-2.5" /><path d="M64.7,262.9 h7 M68.2,262.9 v-5.5 M68.2,261.9 l-2.8,-2.5 M68.2,261.9 l2.8,-2.5" /><path d="M292.6,174.1 h7 M296.1,174.1 v-5.5 M296.1,173.1 l-2.8,-2.5 M296.1,173.1 l2.8,-2.5" /><path d="M556.3,174.4 h7 M559.8,174.4 v-5.5 M559.8,173.4 l-2.8,-2.5 M559.8,173.4 l2.8,-2.5" /><path d="M277.0,102.5 h7 M280.5,102.5 v-5.5 M280.5,101.5 l-2.8,-2.5 M280.5,101.5 l2.8,-2.5" /><path d="M133.7,77.0 h7 M137.2,77.0 v-5.5 M137.2,76.0 l-2.8,-2.5 M137.2,76.0 l2.8,-2.5" /><path d="M248.4,312.8 h7 M251.9,312.8 v-5.5 M251.9,311.8 l-2.8,-2.5 M251.9,311.8 l2.8,-2.5" /><path d="M493.8,150.5 h7 M497.3,150.5 v-5.5 M497.3,149.5 l-2.8,-2.5 M497.3,149.5 l2.8,-2.5" /><path d="M553.0,219.0 h7 M556.5,219.0 v-5.5 M556.5,218.0 l-2.8,-2.5 M556.5,218.0 l2.8,-2.5" /><path d="M247.4,53.0 h7 M250.9,53.0 v-5.5 M250.9,52.0 l-2.8,-2.5 M250.9,52.0 l2.8,-2.5" /><path d="M8.5,63.3 h7 M12.0,63.3 v-5.5 M12.0,62.3 l-2.8,-2.5 M12.0,62.3 l2.8,-2.5" /><path d="M116.6,281.2 h7 M120.1,281.2 v-5.5 M120.1,280.2 l-2.8,-2.5 M120.1,280.2 l2.8,-2.5" /><path d="M123.4,52.6 h7 M126.9,52.6 v-5.5 M126.9,51.6 l-2.8,-2.5 M126.9,51.6 l2.8,-2.5" /><path d="M111.0,179.3 h7 M114.5,179.3 v-5.5 M114.5,178.3 l-2.8,-2.5 M114.5,178.3 l2.8,-2.5" /><path d="M522.7,292.5 h7 M526.2,292.5 v-5.5 M526.2,291.5 l-2.8,-2.5 M526.2,291.5 l2.8,-2.5" /><path d="M283.6,244.8 h7 M287.1,244.8 v-5.5 M287.1,243.8 l-2.8,-2.5 M287.1,243.8 l2.8,-2.5" /><path d="M159.2,217.8 h7 M162.7,217.8 v-5.5 M162.7,216.8 l-2.8,-2.5 M162.7,216.8 l2.8,-2.5" /><path d="M554.9,89.2 h7 M558.4,89.2 v-5.5 M558.4,88.2 l-2.8,-2.5 M558.4,88.2 l2.8,-2.5" /><path d="M311.8,211.8 h7 M315.3,211.8 v-5.5 M315.3,210.8 l-2.8,-2.5 M315.3,210.8 l2.8,-2.5" /><path d="M54.3,57.0 h7 M57.8,57.0 v-5.5 M57.8,56.0 l-2.8,-2.5 M57.8,56.0 l2.8,-2.5" /><path d="M104.8,158.2 h7 M108.3,158.2 v-5.5 M108.3,157.2 l-2.8,-2.5 M108.3,157.2 l2.8,-2.5" /><path d="M452.9,259.0 h7 M456.4,259.0 v-5.5 M456.4,258.0 l-2.8,-2.5 M456.4,258.0 l2.8,-2.5" /><path d="M279.8,132.4 h7 M283.3,132.4 v-5.5 M283.3,131.4 l-2.8,-2.5 M283.3,131.4 l2.8,-2.5" /><path d="M10.8,244.5 h7 M14.3,244.5 v-5.5 M14.3,243.5 l-2.8,-2.5 M14.3,243.5 l2.8,-2.5" /><path d="M286.0,71.3 h7 M289.5,71.3 v-5.5 M289.5,70.3 l-2.8,-2.5 M289.5,70.3 l2.8,-2.5" /><path d="M352.3,53.8 h7 M355.8,53.8 v-5.5 M355.8,52.8 l-2.8,-2.5 M355.8,52.8 l2.8,-2.5" /><path d="M507.5,239.8 h7 M511.0,239.8 v-5.5 M511.0,238.8 l-2.8,-2.5 M511.0,238.8 l2.8,-2.5" /><path d="M255.0,288.5 h7 M258.5,288.5 v-5.5 M258.5,287.5 l-2.8,-2.5 M258.5,287.5 l2.8,-2.5" /><path d="M440.4,135.9 h7 M443.9,135.9 v-5.5 M443.9,134.9 l-2.8,-2.5 M443.9,134.9 l2.8,-2.5" /><path d="M450.7,52.5 h7 M454.2,52.5 v-5.5 M454.2,51.5 l-2.8,-2.5 M454.2,51.5 l2.8,-2.5" /><path d="M339.2,71.0 h7 M342.7,71.0 v-5.5 M342.7,70.0 l-2.8,-2.5 M342.7,70.0 l2.8,-2.5" /><path d="M51.3,239.9 h7 M54.8,239.9 v-5.5 M54.8,238.9 l-2.8,-2.5 M54.8,238.9 l2.8,-2.5" /><path d="M391.1,146.8 h7 M394.6,146.8 v-5.5 M394.6,145.8 l-2.8,-2.5 M394.6,145.8 l2.8,-2.5" /><path d="M520.5,52.7 h7 M524.0,52.7 v-5.5 M524.0,51.7 l-2.8,-2.5 M524.0,51.7 l2.8,-2.5" /><path d="M73.9,168.6 h7 M77.4,168.6 v-5.5 M77.4,167.6 l-2.8,-2.5 M77.4,167.6 l2.8,-2.5" /></g>
<polyline points="158,52 161.6,53.7 196.8,61.1 214.4,63.7 246,62.8 277.6,60.7 281.1,57.2 275.9,53.7 273,52" fill="none" stroke="#e3ead2" stroke-width="3.2" stroke-linejoin="round" stroke-opacity="0.8"/>
<polyline points="158,52 161.6,53.7 196.8,61.1 214.4,63.7 246,62.8 277.6,60.7 281.1,57.2 275.9,53.7 273,52" fill="none" stroke="#f07f72" stroke-width="1.8" stroke-linejoin="round" stroke-dasharray="2.6,2.2"/>
<polygon points="268,245 449,245 449.2,255.5 470,260.5 491.1,267 508.7,281.6 520.4,306.8 374,330 260,345" fill="#ffffe5" stroke="#f0ea98" stroke-width="1.2" stroke-linejoin="round" />
<polygon points="10,523.5 56.2,539.3 53.5,560 10,560" fill="#ffffe5" stroke="#f0ea98" stroke-width="1.2" stroke-linejoin="round" />
<polygon points="10,344.2 64.2,343.1 68.6,347 104.6,387.8 76.4,441.8 10,380" fill="#f2d0cf" />
<polyline points="330,254 360.6,270.7 441,266.2 460.2,268.9 475,273.5 488,279.5 499,289 505.5,300 509,310 511.5,322" fill="none" stroke="#bdbdbd" stroke-width="7.4" stroke-linejoin="round" stroke-linecap="round"/><polyline points="330,254 360.6,270.7 441,266.2 460.2,268.9 475,273.5 488,279.5 499,289 505.5,300 509,310 511.5,322" fill="none" stroke="#ffffff" stroke-width="6.2" stroke-linejoin="round" stroke-linecap="round"/>
<polyline points="4,365 30,366 40,367.2 74.5,412 73.7,445" fill="none" stroke="#bdbdbd" stroke-width="8.0" stroke-linejoin="round" stroke-linecap="round"/><polyline points="4,365 30,366 40,367.2 74.5,412 73.7,445" fill="none" stroke="#ffffff" stroke-width="6.8" stroke-linejoin="round" stroke-linecap="round"/>
<polyline points="418,383.8 366.7,393 355.4,430.2 352.2,510" fill="none" stroke="#bdbdbd" stroke-width="7.7" stroke-linejoin="round" stroke-linecap="round"/><polyline points="418,383.8 366.7,393 355.4,430.2 352.2,510" fill="none" stroke="#ffffff" stroke-width="6.5" stroke-linejoin="round" stroke-linecap="round"/>
<polyline points="69,530 55,560" fill="none" stroke="#bdbdbd" stroke-width="7.7" stroke-linejoin="round" stroke-linecap="round"/><polyline points="69,530 55,560" fill="none" stroke="#ffffff" stroke-width="6.5" stroke-linejoin="round" stroke-linecap="round"/>
<polyline points="0,313 14,317.5 150,353.5 176,361.5 188,364.3 215,362.3 285.4,350.2 380,340.8 560,316.8" fill="none" stroke="#bdbdbd" stroke-width="12.6" stroke-linejoin="round" stroke-linecap="butt"/><polyline points="0,313 14,317.5 150,353.5 176,361.5 188,364.3 215,362.3 285.4,350.2 380,340.8 560,316.8" fill="none" stroke="#ffffff" stroke-width="11.2" stroke-linejoin="round" stroke-linecap="butt"/>
<polygon points="64.1,223.2 75.1,207.3 98.4,223.2 87.4,237.9" fill="#d9d0c9" stroke="#c4b6ab" stroke-width="0.8" stroke-linejoin="round" />
<polygon points="38.5,246.5 47,237.9 60.5,248.9 64.1,247 72.7,258.7 60.5,270.9 49.5,259.9 51.9,257.5" fill="#d9d0c9" stroke="#c4b6ab" stroke-width="0.8" stroke-linejoin="round" />
<polygon points="73.9,303.9 81.3,295.4 100.1,307.6 92.3,317.4" fill="#d9d0c9" stroke="#c4b6ab" stroke-width="0.8" stroke-linejoin="round" />
<polygon points="160.2,318.6 163.2,301.5 189.6,305.6 187.1,322.3" fill="#d9d0c9" stroke="#c4b6ab" stroke-width="0.8" stroke-linejoin="round" />
<polygon points="197.7,340.8 203.8,333 223.3,340.8 218.5,353" fill="#d9d0c9" stroke="#c4b6ab" stroke-width="0.8" stroke-linejoin="round" />
<polygon points="229.5,408.8 248.5,365.9 260.8,364.5 267.9,373.3 250.2,417.3" fill="#d9d0c9" stroke="#c4b6ab" stroke-width="0.8" stroke-linejoin="round" />
<polygon points="307,372.2 342.5,366.4 347.3,394.8 311.2,401.2" fill="#d9d0c9" stroke="#c4b6ab" stroke-width="0.8" stroke-linejoin="round" />
<polygon points="100.5,453.1 114.4,416.9 118.3,417.5 128.9,390.5 141.4,395.2 144,388.2 157.9,393.2 149.3,416.2 159.8,420.2 162.5,412.7 186.8,422.2 184.2,429.8 187.5,431.1 179.6,451.8 177,451.1 173,460.4 153.2,452.5 156.5,443.2 133.5,434 122.9,461.7" fill="#d9d0c9" stroke="#c4b6ab" stroke-width="0.8" stroke-linejoin="round" />
<polygon points="10,423.5 21.3,424.7 31.1,439.4 23.8,445.5 18.9,466.3 10,467.5" fill="#d9d0c9" stroke="#c4b6ab" stroke-width="0.8" stroke-linejoin="round" />
<polygon points="217.2,465 240.5,463.3 242.9,478.5 323.6,473.1 325.6,485.3 316.3,486.3 316.8,495.1 266.1,499.3 265.7,505.4 212.3,509 211.1,493.2 219,491.9" fill="#d9d0c9" stroke="#c4b6ab" stroke-width="0.8" stroke-linejoin="round" />
<polygon points="382.2,434.6 404.7,429.1 414.7,468 392.5,473.8 395.7,489.1 376.7,493.7 372.3,475 378.4,473.6 373.1,450.2 385.7,446.9" fill="#d9d0c9" stroke="#c4b6ab" stroke-width="0.8" stroke-linejoin="round" />
<polygon points="377.6,353 448.9,343.2 452.2,377.2 462.1,375.7 479.6,445.2 498.3,440.8 496.5,429.9 517.6,425 524.6,457.3 456.6,474.9 433.1,382.7 436.4,381.6 434.2,367.3 380.9,373.9" fill="#d9d0c9" stroke="#c4b6ab" stroke-width="0.8" stroke-linejoin="round" />
<polygon points="494.5,334.8 556,338.6 556,368 492.8,363.5" fill="#d9d0c9" stroke="#c4b6ab" stroke-width="0.8" stroke-linejoin="round" />
<polygon points="435.1,537.2 490.2,523.7 496.3,544.5 498,560 440,560" fill="#d9d0c9" stroke="#c4b6ab" stroke-width="0.8" stroke-linejoin="round" />
<polygon points="374,550.6 413.1,542 416.8,560 374,560" fill="#d9d0c9" stroke="#c4b6ab" stroke-width="0.8" stroke-linejoin="round" />
<polygon points="81,551 95.7,552.5 97,560 80,560" fill="#d9d0c9" stroke="#c4b6ab" stroke-width="0.8" stroke-linejoin="round" />
<polygon points="270.3,265 305.3,260 326.5,274 327.4,287.8 337.5,286.9 338.5,290.6 438.1,277.3 442.7,302.6 320,323.7 320,329.8 278.4,337.2" fill="#d9d0c9" stroke="#c4b6ab" stroke-width="0.8" stroke-linejoin="round" />
<polygon points="53.7,355.4 61.6,349.2 68.2,359.3 73,356.2 87.5,373.8 93.2,381.7 78.7,392.7 72.1,383.5 76.1,380.4 74.8,377.3 70.4,380 60.3,365.9" fill="#d9d0c9" stroke="#c4b6ab" stroke-width="0.8" stroke-linejoin="round" />
<polygon points="54.1,370.3 60.3,365.9 70.4,380 63.8,384.8" fill="#d9d0c9" stroke="#c4b6ab" stroke-width="0.8" stroke-linejoin="round" />
<polygon points="50.2,372 53,370.2 70.2,395.4 67.2,397.6" fill="#d9d0c9" stroke="#c4b6ab" stroke-width="0.8" stroke-linejoin="round" />
<polygon points="39.2,380.4 41.9,378.6 62,405 59,407" fill="#d9d0c9" stroke="#c4b6ab" stroke-width="0.8" stroke-linejoin="round" />
<polygon points="4,343.6 14,357 37.2,388 73.9,439.4 104.5,480.9 118,495 129,505 142,514.5 152,520.5 160,524 172,527.5 198.6,532.2 219.6,533 267.1,529.5 374,503 560,457.5 560,497.8 374,544.5 336,556 132.6,556 101,547.2 66.7,532.7 14,511.6 4,507.6 4,479.3 14,480.9 44.6,485.8 51.9,482.2 59.2,477.3 64.1,471.1 65.8,466.3 65.4,460.1 14,390.4 4,375.5" fill="#fcd6a4" stroke="#a0700e" stroke-width="1.2" stroke-linejoin="round" />
<polyline points="287,547 374,523.7 554,478.5" fill="none" stroke="#a0700e" stroke-width="1" stroke-linejoin="round" />
<polygon points="72.7,493.2 80.5,482.2 88.6,496.8" fill="#cdebb0" stroke="#a0700e" stroke-width="0.8" stroke-linejoin="round" />
<polygon points="94.7,524.5 99.6,520.8 121.6,524.5 134.3,534.2" fill="#cdebb0" stroke="#a0700e" stroke-width="0.8" stroke-linejoin="round" />
<polygon points="286.9,547.2 311.9,539.3 288,549.5" fill="#cdebb0" stroke="#a0700e" stroke-width="0.8" stroke-linejoin="round" />
<circle cx="263.3" cy="551.8" r="4" fill="#aed18d" stroke="#a0700e" stroke-width="0.6"/>
<g transform="translate(39.7,495.1) rotate(10)"><path d="M-2,0 H5.5" stroke="#4b3a1a" stroke-width="1.2" fill="none"/><path d="M-6,0 L-1,-3 L-1,3 Z" fill="#4b3a1a"/></g>
<g transform="translate(51.9,516.9) rotate(205)"><path d="M-2,0 H5.5" stroke="#4b3a1a" stroke-width="1.2" fill="none"/><path d="M-6,0 L-1,-3 L-1,3 Z" fill="#4b3a1a"/></g>
<g transform="translate(170.5,537.2) rotate(12)"><path d="M-2,0 H5.5" stroke="#4b3a1a" stroke-width="1.2" fill="none"/><path d="M-6,0 L-1,-3 L-1,3 Z" fill="#4b3a1a"/></g>
<g transform="translate(403.5,506.3) rotate(-14)"><path d="M-2,0 H5.5" stroke="#4b3a1a" stroke-width="1.2" fill="none"/><path d="M-6,0 L-1,-3 L-1,3 Z" fill="#4b3a1a"/></g>
<g transform="translate(398.5,526.8) rotate(166)"><path d="M-2,0 H5.5" stroke="#4b3a1a" stroke-width="1.2" fill="none"/><path d="M-6,0 L-1,-3 L-1,3 Z" fill="#4b3a1a"/></g>
<g transform="translate(537,491.7) rotate(166)"><path d="M-2,0 H5.5" stroke="#4b3a1a" stroke-width="1.2" fill="none"/><path d="M-6,0 L-1,-3 L-1,3 Z" fill="#4b3a1a"/></g>
<g font-family="Liberation Sans" font-size="11.3" fill="#222" stroke="#fff" stroke-opacity="0.75" stroke-width="2.2" stroke-linejoin="round" paint-order="stroke"><text font-size="11.8" transform="translate(362.5,347.5) rotate(-8)">Via Real Maestranza</text><text font-size="11.7" transform="translate(460.5,495.5) rotate(-15)">Via Filippo Paladini</text><text font-size="11.4" transform="translate(295.5,556.5) rotate(-13.4)">Via Filippo Paladini</text></g>
<g font-family="Liberation Sans" font-style="italic" font-size="12.2" fill="#fff" stroke="#fff" stroke-width="2.4" stroke-linejoin="round" text-anchor="middle" opacity="0.85"><text x="389" y="282.8">Facoltà</text><text x="389.3" y="296.5">di Ingegneria</text><text x="389.2" y="310.5">Elettrica</text></g>
<g font-family="Liberation Sans" font-style="italic" font-size="12.2" fill="#66661f" stroke="#66661f" stroke-width="0.2" text-anchor="middle"><text x="389" y="282.8">Facoltà</text><text x="389.3" y="296.5">di Ingegneria</text><text x="389.2" y="310.5">Elettrica</text></g>
<text x="50.5" y="408.6" font-family="Liberation Sans" font-size="10" fill="#0a7fd8" text-anchor="middle" stroke="#fff" stroke-opacity="0.6" stroke-width="1.2" paint-order="stroke">Enilive</text>
<g fill="#0a84d6"><rect x="45" y="385" width="8.5" height="12.5" rx="1"/><rect x="46.5" y="386.8" width="5.5" height="3" fill="#cfe6f7"/><path d="M54,387 q3,1 3,5 v4 q0,2 -1.5,2" stroke="#0a84d6" stroke-width="1.3" fill="none"/></g>
<g transform="translate(362.7,506.6)"><rect x="-3.5" y="-4.5" width="7" height="8" rx="1.5" fill="none" stroke="#0a84d6" stroke-width="1.3"/><rect x="-2.5" y="-2.5" width="5" height="2.5" fill="#0a84d6"/><rect x="-3" y="3.5" width="1.5" height="1.5" fill="#0a84d6"/><rect x="1.5" y="3.5" width="1.5" height="1.5" fill="#0a84d6"/></g>
<g transform="translate(357.4,551)"><rect x="-3.5" y="-4.5" width="7" height="8" rx="1.5" fill="none" stroke="#0a84d6" stroke-width="1.3"/><rect x="-2.5" y="-2.5" width="5" height="2.5" fill="#0a84d6"/><rect x="-3" y="3.5" width="1.5" height="1.5" fill="#0a84d6"/><rect x="1.5" y="3.5" width="1.5" height="1.5" fill="#0a84d6"/></g>
<defs><filter id="blur" x="-50%" y="-50%" width="200%" height="200%"><feGaussianBlur stdDeviation="3.5"/></filter><linearGradient id="mg" x1="0" y1="0" x2="0" y2="1"><stop offset="0" stop-color="#3a8fd2"/><stop offset="1" stop-color="#1c74c6"/></linearGradient></defs>
<ellipse cx="297" cy="290" rx="14" ry="6" transform="rotate(-45 297 290)" fill="#000" opacity="0.2" filter="url(#blur)"/>
<defs><filter id="blur2" x="-50%" y="-50%" width="200%" height="200%"><feGaussianBlur stdDeviation="2"/></filter></defs><ellipse cx="291" cy="297" rx="7" ry="3" transform="rotate(-45 291 297)" fill="#000" opacity="0.3" filter="url(#blur2)"/>
<path d="M284.5,303.3 L273.63,280.09 A12 12 0 1 1 295.37,280.09 Z" fill="url(#mg)" stroke="#2a6aa0" stroke-width="1" stroke-linejoin="round"/>
<path d="M284.5,300.5 L274.8,280 A10.8 10.8 0 1 1 294.2,280 Z" fill="none" stroke="#5aa2dc" stroke-opacity="0.5" stroke-width="0.8"/>
<circle cx="284.5" cy="275.8" r="4.4" fill="#fff" stroke="#2b78c0" stroke-width="0.6"/>
</svg>
<div class="zoom"><div class="zin"><i style="position:absolute;left:9px;top:14px;width:12px;height:2px;background:#bbb"></i><i style="position:absolute;left:14px;top:9px;width:2px;height:12px;background:#bbb"></i></div><div class="zout"><i style="position:absolute;left:9.5px;top:44px;width:12.5px;height:2.5px;background:#000"></i></div></div>
<div class="popup">
  <div class="close"></div>
  <div class="pc"><b>Aula n.3 - II ANNO MEDIT</b><br><i>Numero posti: 60</i><div style="margin-top:17.6px"><i>Polo di Caltanissetta - Via R.Maestranza - Via Real Maestranza - Caltanissetta</i></div></div>
</div>
<div class="tipc"><div class="tip"></div></div>
<div class="attr">Leaflet</div>
</div>

<table class="tbl" style="top:54px">
<tr><th colspan="2">Dettagli Struttura</th></tr>
<tr><td style="width:88px">Descrizione</td><td>Aula n.3 - II ANNO MEDIT</td></tr>
<tr><td>Piano</td><td>0</td></tr>
<tr><td>Tipologia</td><td>AULA DIDATTICA</td></tr>
<tr><td>Numero di<br>Posti<br>Disponibili</td><td>60</td></tr>
<tr><td>Edificio</td><td>Polo di Caltanissetta - Via R.Maestranza</td></tr>
<tr><td>Indirizzo</td><td>Polo di Caltanissetta - Via R.Maestranza - Via Real Maestranza -<br>Caltanissetta</td></tr>
<tr><td>Scuole</td><td>[FORMAZIONE INSEGNANTI]</td></tr>
<tr><td>Dipartimenti</td><td>[Scienze Agrarie, Alimentari e Forestali, Scienze e Tecnologie<br>Biologiche, Chimiche e Farmaceutiche, Ingegneria, Biomedicina,<br>Neuroscienze e Diagnostica avanzata, Promozione della Salute,<br>Materno-Infantile, di Medicina Interna e Specialistica di Eccellenza “G.<br>D’Alessandro”]</td></tr>
</table>

<table class="tbl" style="top:524px">
<tr><th>Tipo strumentazione / Quantita'</th></tr>
<tr><td>LAVAGNA <span class="badge">2</span></td></tr>
<tr><td>POSTAZIONE COMPUTER <span class="badge">1</span></td></tr>
<tr><td>PROIETTORE <span class="badge">1</span></td></tr>
</table>
</body></html>
